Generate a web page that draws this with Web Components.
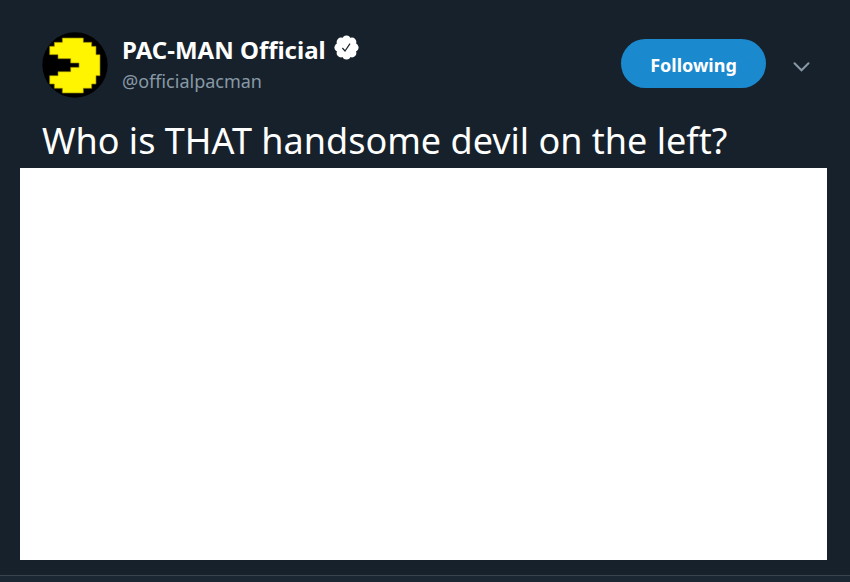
<!DOCTYPE html>
<html lang="en">
<head>
<meta charset="utf-8">
<meta name="viewport" content="width=device-width, initial-scale=1">
<title>PAC-MAN Official</title>
<style>
  html { height: 100%; }
  body { margin: 0; min-height: 100%; display: flex; background: #17212b; color: #fff; font-family: "Noto Sans", "Open Sans", sans-serif; }
</style>
</head>
<body>
<tweet-card>
  <tweet-header slot="header">
    <user-avatar slot="avatar"></user-avatar>
    <user-name slot="name" handle="@officialpacman">PAC-MAN Official<verified-badge slot="badge"></verified-badge></user-name>
    <follow-button slot="actions">Following</follow-button>
    <more-button slot="actions"></more-button>
  </tweet-header>
  <tweet-text slot="text">Who is THAT handsome devil on the left?</tweet-text>
  <media-panel slot="media"></media-panel>
</tweet-card>

<script>
  const define = (name, html, setup) => customElements.define(name, class extends HTMLElement {
    constructor() {
      super();
      this.attachShadow({ mode: "open" }).innerHTML = html;
    }
    connectedCallback() { if (setup) setup(this); }
  });

  define("tweet-card", `
    <style>
      :host { flex: 1; display: flex; min-width: 0; }
      article { flex: 1; min-width: 0; display: flex; flex-direction: column; }
      .content { flex: 1; display: flex; flex-direction: column; padding: 32px 23px 15px 20px; }
      footer { height: 6px; border-top: 1px solid #38444d; background: #1b2733; }
    </style>
    <article>
      <div class="content">
        <slot name="header"></slot>
        <slot name="text"></slot>
        <slot name="media"></slot>
      </div>
      <footer></footer>
    </article>`);

  define("tweet-header", `
    <style>
      :host { display: block; padding: 0 16px 0 22px; }
      header { display: flex; align-items: center; gap: 14px; }
      .name { flex: 1; min-width: 0; }
      .actions { display: flex; align-items: center; gap: 26px; padding-bottom: 3px; }
    </style>
    <header>
      <slot name="avatar"></slot>
      <div class="name"><slot name="name"></slot></div>
      <div class="actions"><slot name="actions"></slot></div>
    </header>`);

  define("user-avatar", `
    <style>
      :host { display: block; width: 66px; height: 66px; flex: none; }
      svg { display: block; width: 100%; height: 100%; }
    </style>
    <svg viewBox="19 18 198 198" role="img" aria-label="Avatar">
      <circle cx="118" cy="117" r="98" fill="#000"/>
      <path fill="#fff500" stroke="#8f8200" stroke-width="2" d="M80 36H143V49H168V61H181V86H193V149H181V174H168V187H143V201H80V187H56V174H42V149H67V137H105V124H130V111H105V98H67V86H42V61H56V49H80Z"/>
    </svg>`);

  define("user-name", `
    <style>
      :host { display: flex; flex-direction: column; }
      .line { display: flex; align-items: center; gap: 8px; }
      strong { font-size: 24px; line-height: 32px; font-weight: 700; white-space: nowrap; }
      .handle { font-size: 18px; line-height: 30px; color: #8899a6; }
    </style>
    <div class="line"><strong><slot></slot></strong><slot name="badge"></slot></div>
    <span class="handle"></span>`,
    el => { el.shadowRoot.querySelector(".handle").textContent = el.getAttribute("handle"); });

  define("verified-badge", `
    <style>
      :host { display: block; width: 25px; height: 25px; padding-bottom: 6px; }
      svg { display: block; }
    </style>
    <svg width="25" height="25" viewBox="0 0 25 25" role="img" aria-label="Verified">
      <g fill="#fff">
        <circle cx="12.5" cy="12.5" r="10"/>
        <circle cx="12.5" cy="4.8" r="4.4"/><circle cx="18" cy="7" r="4.4"/>
        <circle cx="20.2" cy="12.5" r="4.4"/><circle cx="18" cy="18" r="4.4"/>
        <circle cx="12.5" cy="20.2" r="4.4"/><circle cx="7" cy="18" r="4.4"/>
        <circle cx="4.8" cy="12.5" r="4.4"/><circle cx="7" cy="7" r="4.4"/>
      </g>
      <path d="M8.4 13L11 16L16 8.7" fill="none" stroke="#17212b" stroke-width="1.2"/>
    </svg>`);

  define("follow-button", `
    <style>
      :host { display: block; }
      button { display: block; min-width: 145px; height: 49px; margin: 0; padding: 2px 24px 0; border: 0; border-radius: 25px; background: #1b89cd; color: #fff; font: 700 18px/24px "Noto Sans", "Open Sans", sans-serif; cursor: pointer; }
    </style>
    <button type="button"><slot></slot></button>`);

  define("more-button", `
    <style>
      :host { display: block; }
      button { display: flex; margin: 0; padding: 6px 0 0; border: 0; background: none; color: #8899a6; cursor: pointer; }
    </style>
    <button type="button" aria-label="More options">
      <svg width="19" height="14" viewBox="0 0 19 14"><path d="M2.5 3.3L9.5 10.3L16.5 3.3" fill="none" stroke="currentColor" stroke-width="2" stroke-linecap="round"/></svg>
    </button>`);

  define("tweet-text", `
    <style>
      :host { display: block; padding: 18px 22px 2px; }
      p { margin: 0; font-size: 36px; line-height: 50px; }
    </style>
    <p><slot></slot></p>`);

  define("media-panel", `
    <style>
      :host { display: block; flex: 1; min-height: 200px; background: #fff; }
    </style>`);
</script>
</body>
</html>
